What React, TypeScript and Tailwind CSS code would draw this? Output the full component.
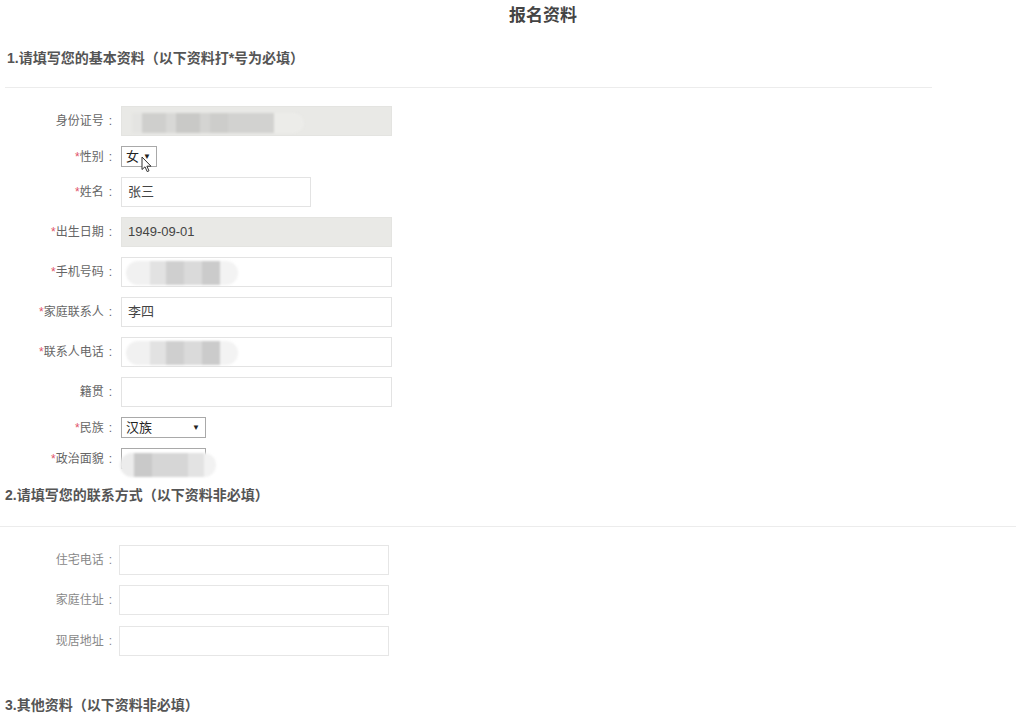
import React from "react";

type Row = {
  label: string;
  req?: boolean;
  kind: "input" | "gray" | "select";
  value?: string;
  width?: string;
  blur?: "id" | "phone" | "select";
};

const basicRows: Row[] = [
  { label: "身份证号", kind: "gray", blur: "id" },
  { label: "性别", req: true, kind: "select", value: "女", width: "w-[36px]" },
  { label: "姓名", req: true, kind: "input", value: "张三", width: "w-[190px]" },
  { label: "出生日期", req: true, kind: "gray", value: "1949-09-01" },
  { label: "手机号码", req: true, kind: "input", blur: "phone" },
  { label: "家庭联系人", req: true, kind: "input", value: "李四" },
  { label: "联系人电话", req: true, kind: "input", blur: "phone" },
  { label: "籍贯", kind: "input" },
  { label: "民族", req: true, kind: "select", value: "汉族", width: "w-[85px]" },
  { label: "政治面貌", req: true, kind: "select", width: "w-[85px]", blur: "select" },
];

const contactRows = ["住宅电话", "家庭住址", "现居地址"];

// smudged-out personal data, drawn over the field
const Smudge = ({ type }: { type: "id" | "phone" | "select" }) => {
  if (type === "id") {
    return (
      <div className="pointer-events-none absolute left-[10px] top-[6px] flex h-[20px] blur-[1px]">
        <span className="w-[10px] bg-[#e4e4e2]" />
        <span className="w-[24px] bg-[#cfcfcd]" />
        <span className="w-[10px] bg-[#d8d8d6]" />
        <span className="w-[24px] bg-[#c9c9c7]" />
        <span className="w-[10px] bg-[#d4d4d2]" />
        <span className="w-[18px] bg-[#cdcdcb]" />
        <span className="w-[46px] bg-[#d2d2d0]" />
        <span className="w-[30px] rounded-r-full bg-[#ecece9]" />
      </div>
    );
  }
  if (type === "phone") {
    return (
      <div className="pointer-events-none absolute left-[4px] top-[3px] flex h-[24px] rounded-full blur-[1px]">
        <span className="w-[24px] rounded-l-full bg-[#f1f1f1]" />
        <span className="w-[16px] bg-[#e2e2e2]" />
        <span className="w-[18px] bg-[#cfcfcf]" />
        <span className="w-[18px] bg-[#dadada]" />
        <span className="w-[18px] bg-[#cbcbcb]" />
        <span className="w-[18px] rounded-r-full bg-[#f3f3f3]" />
      </div>
    );
  }
  return (
    <div className="pointer-events-none absolute -left-[2px] top-[4px] flex h-[24px] blur-[1px]">
      <span className="w-[14px] rounded-l-full bg-[#ececec]" />
      <span className="w-[18px] bg-[#c9c9c9]" />
      <span className="w-[36px] bg-[#d6d6d6]" />
      <span className="w-[16px] bg-[#e3e3e3]" />
      <span className="w-[12px] rounded-r-full bg-[#f2f2f2]" />
    </div>
  );
};

const Cursor = () => (
  <svg
    className="pointer-events-none absolute left-[19px] top-[9px]"
    width="12"
    height="17"
    viewBox="0 0 12 17"
  >
    <path
      d="M1 1 L1 13.5 L4 10.8 L6.2 15.6 L8 14.8 L5.9 10.2 L10 10.2 Z"
      fill="#fff"
      stroke="#333"
      strokeWidth="1"
      strokeLinejoin="round"
    />
  </svg>
);

const Field = ({ row }: { row: Row }) => {
  if (row.kind === "select") {
    return (
      <div
        className={`relative flex h-[21px] items-center justify-between border border-[#a9a9a9] bg-white pl-[4px] pr-[5px] text-[13px] text-[#222] ${row.width}`}
      >
        <span>{row.value}</span>
        <span className="text-[8px] text-[#222]">▼</span>
        {row.value === "女" && <Cursor />}
        {row.blur && <Smudge type={row.blur} />}
      </div>
    );
  }
  const bg = row.kind === "gray" ? "bg-[#e9e9e6] border-[#e4e4e1]" : "bg-white border-[#e3e3e3]";
  return (
    <div
      className={`relative flex h-[30px] items-center border px-[6px] text-[13px] text-[#444] ${bg} ${row.width ?? "w-[271px]"}`}
    >
      {row.value}
      {row.blur && <Smudge type={row.blur} />}
    </div>
  );
};

const Label = ({ text, req, color }: { text: string; req?: boolean; color: string }) => (
  <div className={`flex w-[112px] justify-end text-[12px] ${color}`}>
    {req && <span className="text-[#e0536a]">*</span>}
    <span>{text}</span>
    <span className="ml-[5px]">:</span>
  </div>
);

const App = () => {
  return (
    <div className="min-h-[720px] w-[1016px] overflow-hidden bg-white font-['Liberation_Sans','Noto_Sans_CJK_SC',sans-serif]">
      <h1 className="mt-[6px] pl-[70px] text-center text-[17px] font-bold leading-[20px] text-[#444]">
        报名资料
      </h1>

      <h2 className="mt-[23px] pl-[7px] text-[14px] font-bold leading-[18px] text-[#555]">
        1.请填写您的基本资料（以下资料打*号为必填）
      </h2>
      <div className="ml-[5px] mt-[20px] h-px w-[927px] bg-[#ececec]" />

      <div className="mt-[18px] flex flex-col gap-[10px]">
        {basicRows.map((row) => (
          <div key={row.label} className="flex items-center gap-[9px]">
            <Label text={row.label} req={row.req} color="text-[#666]" />
            <Field row={row} />
          </div>
        ))}
      </div>

      <h2 className="mt-[17px] pl-[5px] text-[14px] font-bold leading-[18px] text-[#555]">
        2.请填写您的联系方式（以下资料非必填）
      </h2>
      <div className="mt-[22px] h-px w-full bg-[#ececec]" />

      <div className="mt-[18px] flex flex-col gap-[10px]">
        {contactRows.map((label, i) => (
          <div key={label} className={`flex items-center gap-[7px] ${i === 2 ? "mt-px" : ""}`}>
            <Label text={label} color="text-[#888]" />
            <div className="h-[30px] w-[270px] border border-[#e6e6e6] bg-white" />
          </div>
        ))}
      </div>

      <h2 className="mt-[40px] pl-[5px] text-[14px] font-bold leading-[18px] text-[#555]">
        3.其他资料（以下资料非必填）
      </h2>
    </div>
  );
};

export default App;
